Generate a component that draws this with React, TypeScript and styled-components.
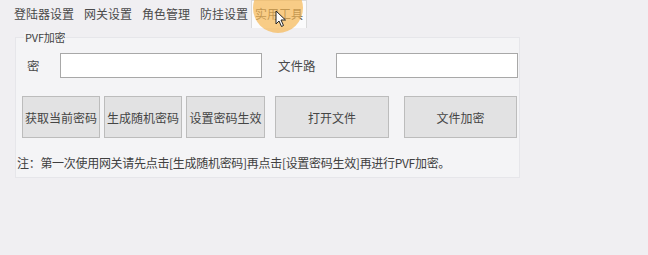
import React from 'react'
import styled, { createGlobalStyle } from 'styled-components'

const GlobalStyle = createGlobalStyle`
  html, body {
    margin: 0;
    padding: 0;
    background: #f0eff2;
  }
  body {
    font-family: "Noto Sans CJK SC", "Noto Sans", sans-serif;
    color: #3a3a3a;
  }
`

const Window = styled.div`
  position: relative;
  width: 648px;
  height: 255px;
  overflow: hidden;
  background: #f0eff2;
`

const TabStrip = styled.div`
  display: flex;
  align-items: stretch;
  height: 28px;
  padding-left: 9px;
  box-sizing: border-box;
`

const Tab = styled.div<{ $active?: boolean }>`
  display: flex;
  align-items: center;
  padding: 0 ${p => (p.$active ? '3px' : '4px')} 2px;
  margin-left: ${p => (p.$active ? '-2px' : '0')};
  font-size: 12px;
  line-height: 1;
  color: #4a4a4a;
  white-space: nowrap;
  background: ${p => (p.$active ? '#fbfbfc' : 'transparent')};
  border: 1px solid ${p => (p.$active ? '#dadada' : 'transparent')};
  border-bottom: none;
`

const Page = styled.div`
  padding: 9px 0 0 15px;
`

const GroupBox = styled.fieldset`
  position: relative;
  box-sizing: border-box;
  width: 505px;
  min-width: 0;
  height: 141px;
  margin: 0;
  padding: 15px 0 0 1px;
  background: #f4f4f6;
  border: 1px solid #e6e6ea;
  display: flex;
  flex-direction: column;
`

const Legend = styled.div`
  position: absolute;
  left: 8px;
  top: -6px;
  padding: 0 1px;
  font-size: 11px;
  line-height: 11px;
  color: #444;
  background: #f3f3f5;
  letter-spacing: -0.2px;
`

const FieldRow = styled.div`
  display: flex;
  align-items: center;
  height: 25px;
`

const FieldLabel = styled.div<{ $width: number; $indent: number }>`
  width: ${p => p.$width}px;
  padding-left: ${p => p.$indent}px;
  box-sizing: border-box;
  font-size: 12.5px;
  color: #4a4a4a;
  white-space: nowrap;
`

const TextBox = styled.div<{ $width: number }>`
  width: ${p => p.$width}px;
  height: 25px;
  box-sizing: border-box;
  background: #ffffff;
  border: 1px solid #a8a8a8;
`

const ButtonRow = styled.div`
  display: flex;
  margin-top: 18px;
  padding-left: 5px;
`

const Button = styled.div<{ $width: number; $gap: number }>`
  width: ${p => p.$width}px;
  height: 42px;
  margin-left: ${p => p.$gap}px;
  box-sizing: border-box;
  display: flex;
  align-items: center;
  justify-content: center;
  background: #e2e2e3;
  border: 1px solid #bcbcbc;
  font-size: 12px;
  color: #454545;
  white-space: nowrap;
`

const Note = styled.div`
  margin-top: 16px;
  font-size: 12px;
  color: #404040;
  white-space: nowrap;
  letter-spacing: -0.3px;
`

const ClickHalo = styled.div`
  position: absolute;
  left: 253px;
  top: -17px;
  width: 50px;
  height: 50px;
  border-radius: 50%;
  background: rgba(246, 184, 84, 0.7);
  pointer-events: none;
`

const Cursor = styled.svg`
  position: absolute;
  left: 275px;
  top: 10px;
  pointer-events: none;
`

export default function App() {
  return (
    <Window>
      <GlobalStyle />
      <TabStrip>
        <Tab>登陆器设置</Tab>
        <Tab>网关设置</Tab>
        <Tab>角色管理</Tab>
        <Tab>防挂设置</Tab>
        <Tab $active>实用工具</Tab>
      </TabStrip>
      <Page>
        <GroupBox>
          <Legend>PVF加密</Legend>
          <FieldRow>
            <FieldLabel $width={43} $indent={10}>密</FieldLabel>
            <TextBox $width={202} />
            <FieldLabel $width={74} $indent={16}>文件路</FieldLabel>
            <TextBox $width={182} />
          </FieldRow>
          <ButtonRow>
            <Button $width={78} $gap={0}>获取当前密码</Button>
            <Button $width={78} $gap={4}>生成随机密码</Button>
            <Button $width={79} $gap={4}>设置密码生效</Button>
            <Button $width={114} $gap={10}>打开文件</Button>
            <Button $width={113} $gap={15}>文件加密</Button>
          </ButtonRow>
          <Note>注：第一次使用网关请先点击[生成随机密码]再点击[设置密码生效]再进行PVF加密。</Note>
        </GroupBox>
      </Page>
      <ClickHalo />
      <Cursor width="12" height="18" viewBox="0 0 12 18">
        <path
          d="M1 1 L1 14 L4 11 L6.5 16.5 L8.5 15.5 L6 10 L10.5 10 Z"
          fill="#ffffff"
          stroke="#222"
          strokeWidth="1"
          strokeLinejoin="round"
        />
      </Cursor>
    </Window>
  )
}
